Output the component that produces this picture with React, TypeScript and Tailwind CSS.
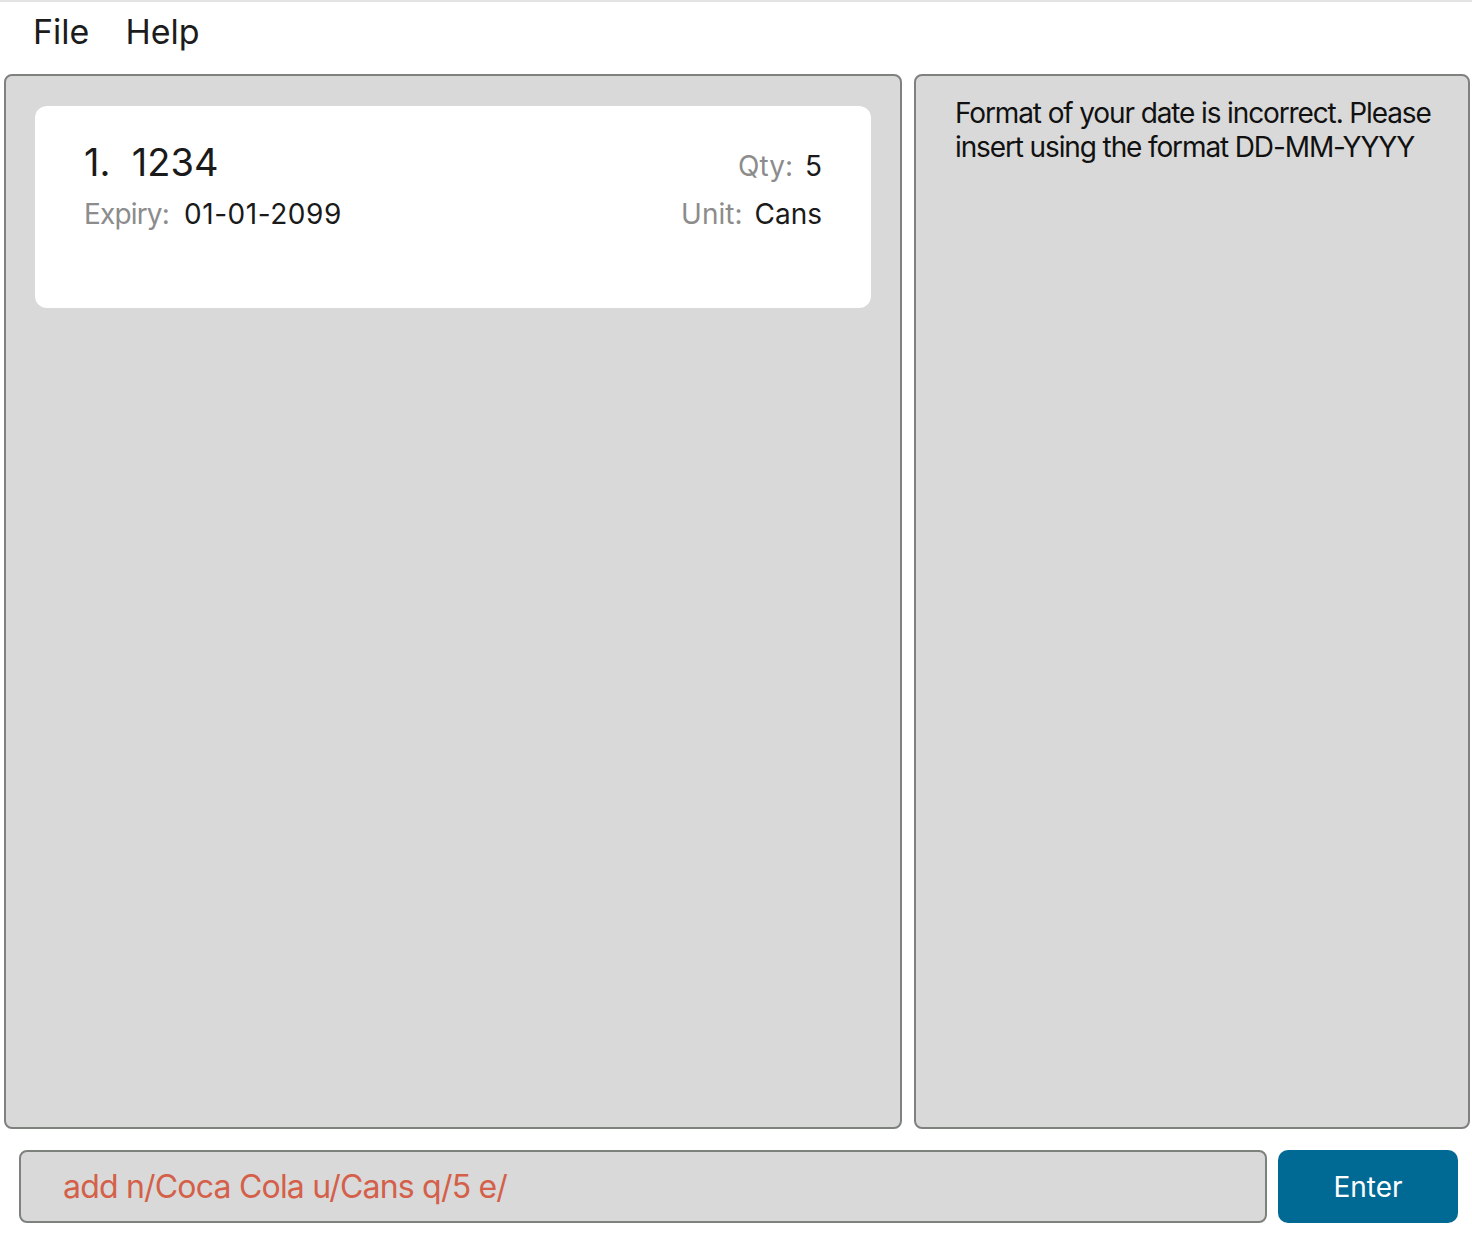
const App = () => {
  return (
    <div
      className="flex h-[1238px] w-[1472px] flex-col overflow-hidden bg-white"
      style={{ fontFamily: 'Inter, "Noto Sans", sans-serif' }}
    >
      <div className="h-[2px] w-full bg-[#e3e3e3]" />

      {/* menu bar */}
      <div className="flex h-[72px] items-center gap-[36px] pl-[33px] pb-[14px] text-[34px] text-[#1c1c1c]">
        <span>File</span>
        <span>Help</span>
      </div>

      {/* main panels */}
      <div className="flex h-[1055px] gap-[12px] pl-[4px] pr-[2px]">
        <div className="w-[898px] rounded-[8px] border-2 border-[#7d827d] bg-[#d9d9d9] px-[29px] pt-[30px]">
          <div className="flex h-[202px] justify-between rounded-[12px] bg-white px-[49px] pt-[30px]">
            <div className="flex flex-col">
              <div className="text-[38px] leading-[52px] text-[#1a1a1a]">1.&nbsp; 1234</div>
              <div className="mt-[6px] text-[28px] leading-[40px]">
                <span className="tracking-[-0.03em] text-[#8c8c8c]">Expiry:</span>
                <span className="ml-[15px] tracking-[0.02em] text-[#1a1a1a]">01-01-2099</span>
              </div>
            </div>
            <div className="flex flex-col items-end pt-[6px] text-[28px] leading-[48px]">
              <div>
                <span className="text-[#8c8c8c]">Qty:</span>
                <span className="ml-[12px] text-[#1a1a1a]">5</span>
              </div>
              <div>
                <span className="text-[#8c8c8c]">Unit:</span>
                <span className="ml-[12px] text-[#1a1a1a]">Cans</span>
              </div>
            </div>
          </div>
        </div>

        <div className="w-[556px] rounded-[8px] border-2 border-[#7d827d] bg-[#d9d9d9] pl-[39px] pr-[20px] pt-[20px]">
          <p className="text-[28px] leading-[34px] tracking-[-0.04em] text-[#111]">
            Format of your date is incorrect. Please insert using the format DD-MM-YYYY
          </p>
        </div>
      </div>

      {/* command box */}
      <div className="mt-[21px] flex h-[73px] gap-[11px] pl-[19px] pr-[14px]">
        <div className="flex flex-1 items-center rounded-[8px] border-2 border-[#7d827d] bg-[#d9d9d9] pl-[42px]">
          <span className="text-[32px] tracking-[-0.025em] text-[#d4604a]">add n/Coca Cola u/Cans q/5 e/</span>
        </div>
        <button className="flex w-[180px] items-center justify-center rounded-[10px] bg-[#006994] text-[28px] text-white">
          Enter
        </button>
      </div>
    </div>
  )
}

export default App
